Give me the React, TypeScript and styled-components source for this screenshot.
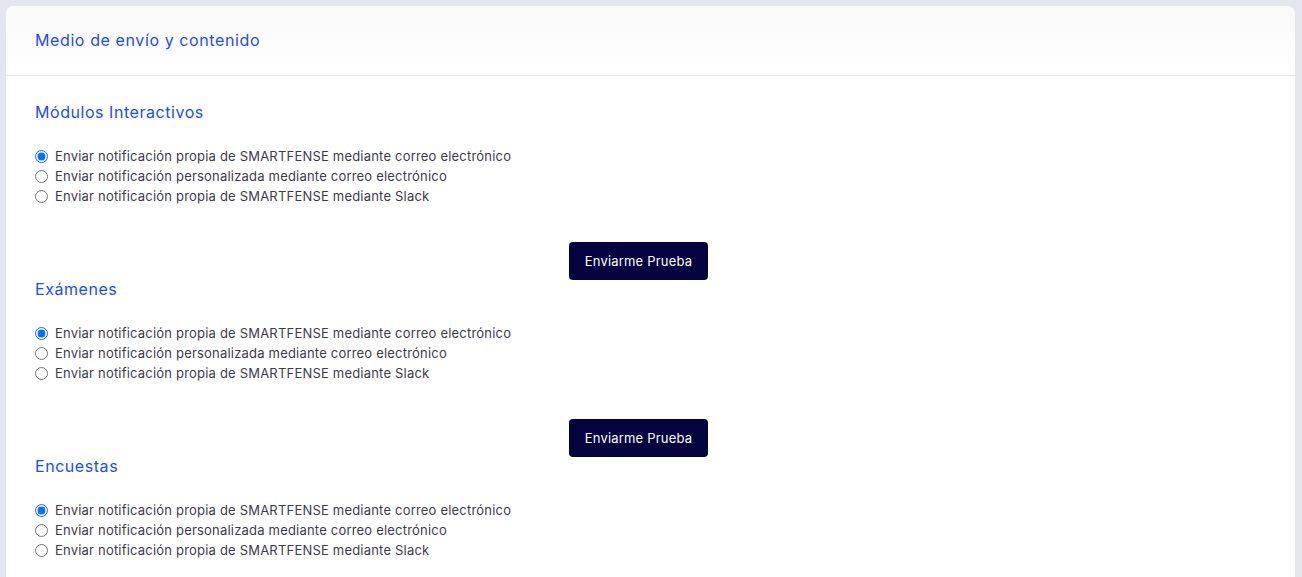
import React from "react";
import styled, { createGlobalStyle } from "styled-components";

const GlobalStyle = createGlobalStyle`
  html, body { margin: 0; padding: 0; }
  body {
    background: #e4e5ed;
    font-family: Inter, "Noto Sans", sans-serif;
  }
`;

const Page = styled.div`
  padding: 6px 7px 0 6px;
  height: 577px;
  box-sizing: border-box;
  overflow: hidden;
`;

const Card = styled.div`
  background: #ffffff;
  border-radius: 8px 8px 0 0;
  min-height: 100%;
`;

const CardHeader = styled.div`
  height: 70px;
  box-sizing: border-box;
  padding: 0 29px 2px;
  display: flex;
  align-items: center;
  border-bottom: 1px solid #e9e9ee;
  background: linear-gradient(#f9f9fa, #ffffff);
  border-radius: 8px 8px 0 0;
`;

const HeaderTitle = styled.h2`
  margin: 0;
  font-size: 16px;
  font-weight: 400;
  color: #1b4cf5;
  letter-spacing: 0.6px;
`;

const CardBody = styled.div`
  padding: 27px 29px 0;
`;

const Section = styled.section`
  display: flex;
  flex-direction: column;
`;

const SectionTitle = styled.h3`
  margin: 0;
  font-size: 16px;
  line-height: 18px;
  font-weight: 400;
  color: #1b4cf5;
  letter-spacing: 0.55px;
`;

const OptionList = styled.div`
  margin-top: 25px;
  display: flex;
  flex-direction: column;
`;

const Option = styled.label`
  display: flex;
  align-items: center;
  gap: 7px;
  height: 20px;
  font-size: 13px;
  color: #3d3b4a;
  letter-spacing: 0.2px;
`;

const Radio = styled.input`
  margin: 0;
  width: 13px;
  height: 13px;
  accent-color: #0d6efd;
`;

const ButtonRow = styled.div`
  display: flex;
  justify-content: center;
  padding-right: 24px;
  margin-top: 36px;
`;

const TestButton = styled.button`
  width: 139px;
  height: 38px;
  border: none;
  border-radius: 4px;
  background: #040340;
  color: #ffffff;
  font-family: Inter, "Noto Sans", sans-serif;
  font-size: 13px;
  font-weight: 400;
  letter-spacing: 0.2px;
  cursor: pointer;
`;

const options = [
  "Enviar notificación propia de SMARTFENSE mediante correo electrónico",
  "Enviar notificación personalizada mediante correo electrónico",
  "Enviar notificación propia de SMARTFENSE mediante Slack",
];

const sections = [
  { key: "modulos", title: "Módulos Interactivos", button: true },
  { key: "examenes", title: "Exámenes", button: true },
  { key: "encuestas", title: "Encuestas", button: false },
];

export default function App() {
  return (
    <>
      <GlobalStyle />
      <Page>
        <Card>
          <CardHeader>
            <HeaderTitle>Medio de envío y contenido</HeaderTitle>
          </CardHeader>
          <CardBody>
            {sections.map((s) => (
              <Section key={s.key}>
                <SectionTitle>{s.title}</SectionTitle>
                <OptionList>
                  {options.map((o, i) => (
                    <Option key={i}>
                      <Radio type="radio" name={s.key} defaultChecked={i === 0} />
                      {o}
                    </Option>
                  ))}
                </OptionList>
                {s.button && (
                  <ButtonRow>
                    <TestButton>Enviarme Prueba</TestButton>
                  </ButtonRow>
                )}
              </Section>
            ))}
          </CardBody>
        </Card>
      </Page>
    </>
  );
}
